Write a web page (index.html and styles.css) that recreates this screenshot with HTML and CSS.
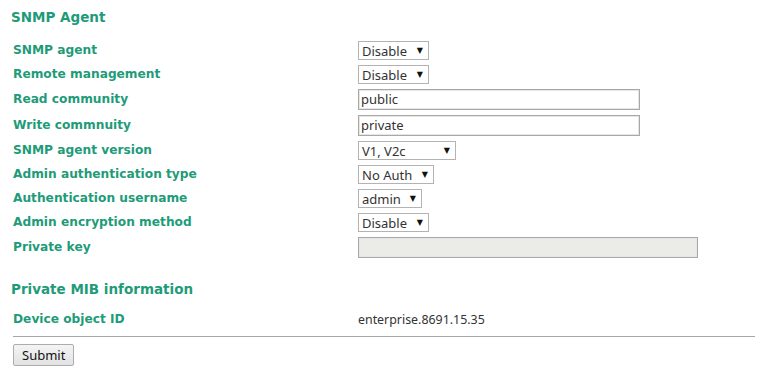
FILE: index.html
```html
<!DOCTYPE html>
<html lang="en">
<head>
    <meta charset="UTF-8">
    <title>SNMP Agent</title>
    <link rel="stylesheet" href="styles.css">
</head>
<body>
    <form class="page">
        <h3 class="section-title">SNMP Agent</h3>
        <table class="form-table agent-table">
            <tr class="row-select">
                <td class="label">SNMP agent</td>
                <td><span class="select-wrap"><select><option>Disable</option><option>Enable</option></select></span></td>
            </tr>
            <tr class="row-select">
                <td class="label">Remote management</td>
                <td><span class="select-wrap"><select><option>Disable</option><option>Enable</option></select></span></td>
            </tr>
            <tr class="row-input">
                <td class="label">Read community</td>
                <td><input type="text" class="text-field" value="public"></td>
            </tr>
            <tr class="row-input">
                <td class="label">Write commnuity</td>
                <td><input type="text" class="text-field" value="private"></td>
            </tr>
            <tr class="row-select">
                <td class="label">SNMP agent version</td>
                <td><span class="select-wrap"><select class="version-select"><option>V1, V2c</option><option>V1, V2c, V3</option><option>V3 only</option></select></span></td>
            </tr>
            <tr class="row-select">
                <td class="label">Admin authentication type</td>
                <td><span class="select-wrap"><select><option>No Auth</option><option>MD5</option><option>SHA</option></select></span></td>
            </tr>
            <tr class="row-select">
                <td class="label">Authentication username</td>
                <td><span class="select-wrap"><select><option>admin</option><option>user</option></select></span></td>
            </tr>
            <tr class="row-select">
                <td class="label">Admin encryption method</td>
                <td><span class="select-wrap"><select><option>Disable</option><option>AES</option></select></span></td>
            </tr>
            <tr class="row-input">
                <td class="label">Private key</td>
                <td><input type="text" class="text-field wide" disabled></td>
            </tr>
        </table>

        <h3 class="section-title mib-title">Private MIB information</h3>
        <table class="form-table mib-table">
            <tr class="row-value">
                <td class="label">Device object ID</td>
                <td class="value">enterprise.8691.15.35</td>
            </tr>
        </table>

        <hr class="divider">
        <button type="button" class="submit-btn">Submit</button>
    </form>
</body>
</html>
```

FILE: styles.css
```css
/* Page */
body {
    margin: 0;
    font-family: "DejaVu Sans", Verdana, sans-serif;
    background: #fff;
}

.page {
    width: 744px;
    padding: 9px 0 0 11px;
}

.section-title {
    margin: 0;
    font-size: 13.5px;
    line-height: 16px;
    font-weight: bold;
    color: #1e9b78;
}

.mib-title {
    margin-top: 21px;
}

/* Label / value table */
.form-table {
    border-collapse: collapse;
}

.agent-table {
    margin-top: 13px;
}

.mib-table {
    margin-top: 10px;
}

.form-table td {
    padding: 0;
    vertical-align: middle;
}

.form-table .label {
    width: 345px;
    padding-left: 2px;
    font-size: 12.2px;
    font-weight: bold;
    color: #1e9b78;
    white-space: nowrap;
}

.row-select td {
    height: 24px;
}

.row-input td {
    height: 26px;
}

.row-value td {
    height: 24px;
}

.value {
    font-family: "Noto Sans", sans-serif;
    font-size: 12.4px;
    color: #333;
}

/* Controls */
.select-wrap {
    position: relative;
    display: inline-block;
}

.select-wrap::after {
    content: "\25BC";
    position: absolute;
    right: 6px;
    top: 5px;
    font-size: 8px;
    color: #111;
    pointer-events: none;
}

select {
    appearance: none;
    -webkit-appearance: none;
    height: 19px;
    padding: 0 20px 0 3px;
    border: 1px solid #b3b3b3;
    border-radius: 0;
    background: #fff;
    font-family: "Noto Sans", sans-serif;
    font-size: 13px;
    color: #333;
    display: block;
}

.version-select {
    width: 98px;
}

.text-field {
    box-sizing: border-box;
    width: 282px;
    height: 21px;
    padding: 0 2px;
    border: 1px solid #a8a8a8;
    box-shadow: inset 0 0 0 1px #e6e6e6;
    font-family: "Noto Sans", sans-serif;
    font-size: 13px;
    color: #333;
    display: block;
}

.text-field.wide {
    width: 340px;
}

.text-field:disabled {
    background: #ebebe7;
}

.divider {
    margin: 5px 0 7px 2px;
    border: 0;
    border-top: 1px solid #a8a8a8;
    width: 742px;
}

.submit-btn {
    display: block;
    margin-left: 2px;
    height: 22px;
    padding: 0 8px;
    border: 1px solid #adadad;
    border-radius: 2px;
    background: linear-gradient(#f4f4f4, #e2e2e2);
    font-family: "Noto Sans", sans-serif;
    font-size: 13px;
    color: #111;
}
```
